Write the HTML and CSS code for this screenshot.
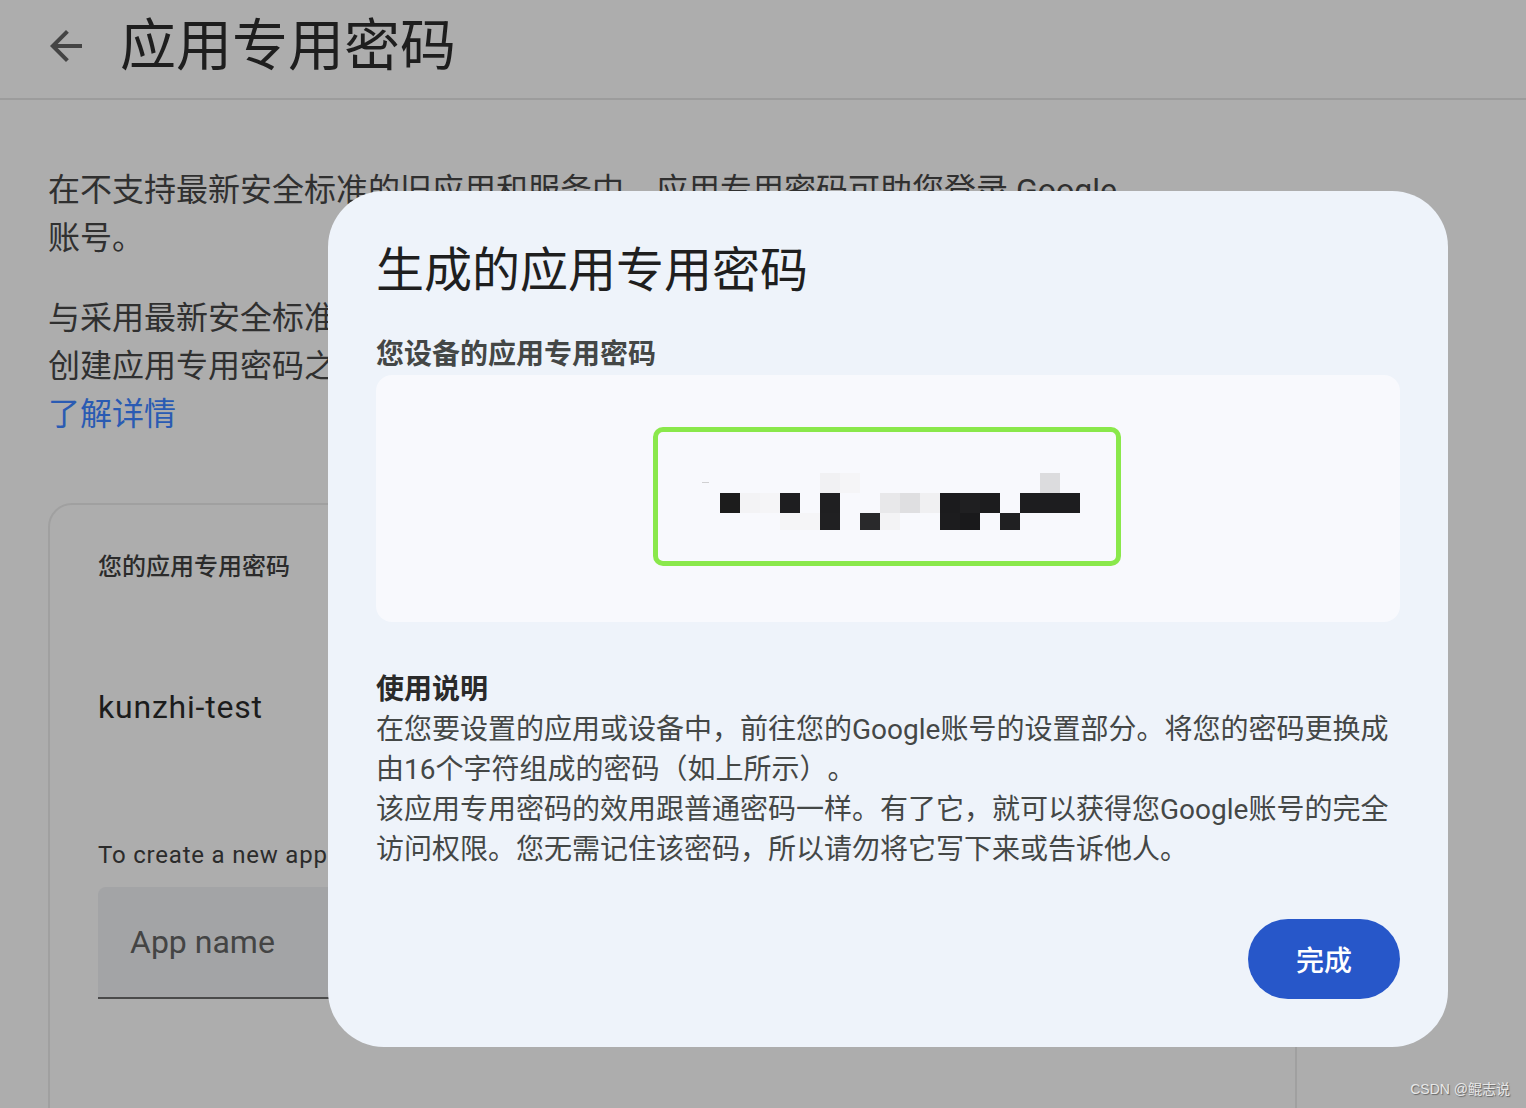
FILE: index.html
```html
<!DOCTYPE html>
<html lang="zh-CN">
<head>
<meta charset="utf-8">
<title>应用专用密码</title>
<link rel="stylesheet" href="styles.css">
</head>
<body>
<div class="page">
  <header class="topbar">
    <button class="back" aria-label="返回">
      <svg viewBox="0 0 24 24" width="48" height="48"><path d="M20 11H7.83l5.59-5.59L12 4l-8 8 8 8 1.41-1.41L7.83 13H20v-2z" fill="currentColor"/></svg>
    </button>
    <h1 class="page-title">应用专用密码</h1>
  </header>
  <main class="content">
    <p class="intro">在不支持最新安全标准的旧应用和服务中，应用专用密码可助您登录 Google 账号。</p>
    <p class="intro second">与采用最新安全标准的新型应用和服务相比，应用专用密码的安全性较低。在创建应用专用密码之前，请检查您的应用是否需要使用它才能登录。<a class="learn" href="#">了解详情</a></p>
    <section class="card">
      <div class="card-label">您的应用专用密码</div>
      <div class="app-entry">kunzhi-test</div>
      <div class="create-hint">To create a new app specific password, type a name for it below...</div>
      <div class="field"><span class="placeholder">App name</span></div>
    </section>
  </main>
</div>

<div class="dialog" role="dialog">
  <h2 class="dialog-title">生成的应用专用密码</h2>
  <div class="dialog-sub">您设备的应用专用密码</div>
  <div class="pw-box">
    <div class="pw-frame">
      <svg class="mosaic" width="380" height="60" viewBox="0 0 380 60">
        <rect x="0" y="11" width="7" height="1" fill="#d0d0d2"/>
        <rect x="118" y="2" width="20" height="20" fill="#f1f1f3"/>
        <rect x="138" y="2" width="20" height="20" fill="#f5f5f7"/>
        <rect x="338" y="2" width="20" height="20" fill="#dcdcde"/>
        <rect x="18" y="22" width="20" height="20" fill="#1c1c1c"/>
        <rect x="38" y="22" width="20" height="20" fill="#f3f3f5"/>
        <rect x="58" y="22" width="20" height="20" fill="#f5f5f7"/>
        <rect x="78" y="22" width="20" height="20" fill="#1e1e20"/>
        <rect x="118" y="22" width="20" height="20" fill="#1f1f21"/>
        <rect x="178" y="22" width="20" height="20" fill="#e8e8ea"/>
        <rect x="198" y="22" width="20" height="20" fill="#dfdfe1"/>
        <rect x="218" y="22" width="20" height="20" fill="#f0f0f2"/>
        <rect x="238" y="22" width="20" height="20" fill="#1b1b1d"/>
        <rect x="258" y="22" width="20" height="20" fill="#1f1f21"/>
        <rect x="278" y="22" width="20" height="20" fill="#1c1c1e"/>
        <rect x="318" y="22" width="60" height="20" fill="#1d1d1f"/>
        <rect x="78" y="42" width="40" height="17" fill="#f5f5f7"/>
        <rect x="118" y="42" width="20" height="17" fill="#202022"/>
        <rect x="158" y="42" width="20" height="17" fill="#29292b"/>
        <rect x="178" y="42" width="20" height="17" fill="#f3f3f5"/>
        <rect x="238" y="42" width="20" height="17" fill="#1c1c1e"/>
        <rect x="258" y="42" width="20" height="17" fill="#19191b"/>
        <rect x="298" y="42" width="20" height="17" fill="#202022"/>
      </svg>
    </div>
  </div>
  <div class="usage">
    <h3 class="usage-title">使用说明</h3>
    <p>在您要设置的应用或设备中，前往您的Google账号的设置部分。将您的密码更换成由16个字符组成的密码（如上所示）。</p>
    <p>该应用专用密码的效用跟普通密码一样。有了它，就可以获得您Google账号的完全访问权限。您无需记住该密码，所以请勿将它写下来或告诉他人。</p>
  </div>
  <div class="dialog-actions">
    <button class="done">完成</button>
  </div>
</div>

<div class="watermark">CSDN @鲲志说</div>
</body>
</html>
```

FILE: styles.css
```css
html, body {
  margin: 0;
  padding: 0;
  height: 100%;
  overflow: hidden;
}

body {
  background: #adadad;
  font-family: Roboto, "Noto Sans CJK SC", "Noto Sans", sans-serif;
  color: #303030;
  text-spacing-trim: space-all;
}

.page {
  width: 100%;
}

.topbar {
  display: flex;
  align-items: center;
  gap: 30px;
  height: 100px;
  box-sizing: border-box;
  padding: 0 0 6px 42px;
  border-bottom: 2px solid #9c9c9c;
}

.back {
  display: flex;
  align-items: center;
  justify-content: center;
  width: 48px;
  height: 48px;
  padding: 0;
  border: 0;
  background: none;
  color: #444;
}

.page-title {
  margin: 0;
  font-size: 56px;
  font-weight: 400;
  line-height: 64px;
  color: #1e1e1e;
}

.content {
  padding: 0 48px;
}

.intro {
  margin: 66px 0 0;
  max-width: 1096px;
  font-size: 32px;
  line-height: 48px;
  color: #303030;
}

.intro.second {
  margin-top: 32px;
}

.learn {
  display: block;
  color: #2a5bb3;
  text-decoration: none;
}

.card {
  margin-top: 65px;
  width: 1249px;
  height: 700px;
  box-sizing: border-box;
  border: 2px solid #a0a0a0;
  border-radius: 24px;
  padding: 46px 48px 0;
}

.card-label {
  font-size: 24px;
  line-height: 32px;
  font-weight: 500;
  color: #2b2b2b;
}

.app-entry {
  margin-top: 100px;
  font-size: 32px;
  line-height: 48px;
  letter-spacing: 0.8px;
  color: #1c1c1c;
}

.create-hint {
  margin-top: 108px;
  font-size: 24px;
  line-height: 32px;
  letter-spacing: 0.8px;
  color: #2b2b2b;
  white-space: nowrap;
}

.field {
  margin-top: 16px;
  height: 112px;
  box-sizing: border-box;
  display: flex;
  align-items: center;
  padding-left: 32px;
  background: #a3a4a6;
  border-radius: 8px 8px 0 0;
  border-bottom: 2px solid #4a4a4a;
}

.placeholder {
  font-size: 32px;
  color: #444;
}

/* dialog */
.dialog {
  position: absolute;
  left: 328px;
  top: 191px;
  width: 1120px;
  height: 856px;
  box-sizing: border-box;
  padding: 48px 48px 48px;
  background: #eef3fa;
  border-radius: 56px;
  display: flex;
  flex-direction: column;
}

.dialog-title {
  margin: 0;
  font-size: 48px;
  line-height: 64px;
  font-weight: 400;
  color: #1f1f1f;
}

.dialog-sub {
  margin-top: 34px;
  font-size: 28px;
  line-height: 36px;
  font-weight: 700;
  color: #444746;
}

.pw-box {
  margin-top: 2px;
  height: 247px;
  background: #f8f9fd;
  border-radius: 16px;
  display: flex;
  align-items: center;
  justify-content: center;
}

.pw-frame {
  width: 468px;
  height: 139px;
  box-sizing: border-box;
  border: 5px solid #8ae84b;
  border-radius: 10px;
  display: flex;
  align-items: center;
  justify-content: center;
  padding: 8px 0 0 10px;
  margin: 0 2px 4px 0;
}

.mosaic {
  display: block;
}

.usage {
  margin-top: 48px;
  font-size: 28px;
  line-height: 40px;
  color: #444746;
}

.usage-title {
  margin: 0;
  font-size: 28px;
  line-height: 40px;
  font-weight: 700;
  color: #2a2a2a;
}

.usage p {
  margin: 0;
}

.dialog-actions {
  margin-top: auto;
  display: flex;
  justify-content: flex-end;
}

.done {
  width: 152px;
  height: 80px;
  border: 0;
  border-radius: 40px;
  background: #2757c9;
  color: #fff;
  font-family: Roboto, "Noto Sans CJK SC", sans-serif;
  font-size: 28px;
  font-weight: 500;
}

.watermark {
  position: absolute;
  right: 16px;
  bottom: 10px;
  font-family: "Liberation Sans", "Noto Sans CJK SC", sans-serif;
  font-size: 14px;
  color: #e8e8e8;
  text-shadow: 1px 1px 1px #666;
}
```
